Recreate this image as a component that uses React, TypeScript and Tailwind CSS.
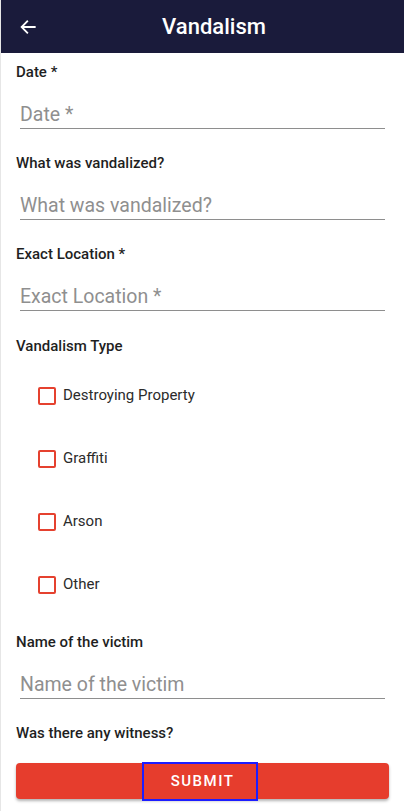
import React from "react";

type FieldProps = {
  label: string;
  placeholder: string;
};

const TextField = ({ label, placeholder }: FieldProps) => {
  return (
    <div className="flex flex-col">
      <p className="text-[15px] leading-5 font-medium text-[#1f1f1f]">{label}</p>
      <div className="mt-5 mx-1 border-b-[1.5px] border-[#8e8e8e]">
        <span className="block text-[19.5px] leading-[26px] text-[#8f8f8f]">{placeholder}</span>
      </div>
    </div>
  );
};

const CheckRow = ({ text }: { text: string }) => {
  return (
    <div className="h-[63px] flex items-center pl-[22px] gap-[7px]">
      <span className="size-[18px] border-2 border-[#e5412f] rounded-[2px]" />
      <span className="text-[15px] text-[#2b2b2b]">{text}</span>
    </div>
  );
};

const App = () => {
  return (
    <div className="w-[404px] h-[811px] bg-white overflow-hidden border-l border-[#e6e6e6] font-['Roboto',sans-serif]">
      {/* app bar */}
      <div className="h-[53px] bg-[#1a1b3b] flex items-center pl-[18px] pr-[19px]">
        <svg width="18" height="18" viewBox="0 0 24 24" fill="none" stroke="white" strokeWidth="2.4" strokeLinecap="square">
          <path d="M21 12H4M11 4.5L3.5 12L11 19.5" />
        </svg>
        <h1 className="flex-1 text-center text-white text-[22px] font-medium ml-[6px]">
          Vandalism
        </h1>
      </div>

      {/* form */}
      <div className="px-[15px] pt-[9px] flex flex-col">
        <TextField label="Date *" placeholder="Date *" />
        <div className="mt-6">
          <TextField label="What was vandalized?" placeholder="What was vandalized?" />
        </div>
        <div className="mt-6">
          <TextField label="Exact Location *" placeholder="Exact Location *" />
        </div>

        <p className="mt-[25px] text-[15px] leading-5 font-medium text-[#1f1f1f]">Vandalism Type</p>
        <div className="mt-[8px] flex flex-col">
          <CheckRow text="Destroying Property" />
          <CheckRow text="Graffiti" />
          <CheckRow text="Arson" />
          <CheckRow text="Other" />
        </div>

        <div className="mt-[16px]">
          <TextField label="Name of the victim" placeholder="Name of the victim" />
        </div>

        <p className="mt-6 text-[15px] leading-5 font-medium text-[#1f1f1f]">Was there any witness?</p>

        <button className="relative mt-5 h-9 w-full rounded bg-[#e63d2d] text-white text-[15px] font-medium tracking-[0.1em] shadow-[0_2px_3px_rgba(0,0,0,0.3)]">
          SUBMIT
          <span className="absolute left-[126px] top-[-1px] w-[116px] h-[39px] border-2 border-[#1d1dff]" />
        </button>
      </div>
    </div>
  );
};

export default App;
